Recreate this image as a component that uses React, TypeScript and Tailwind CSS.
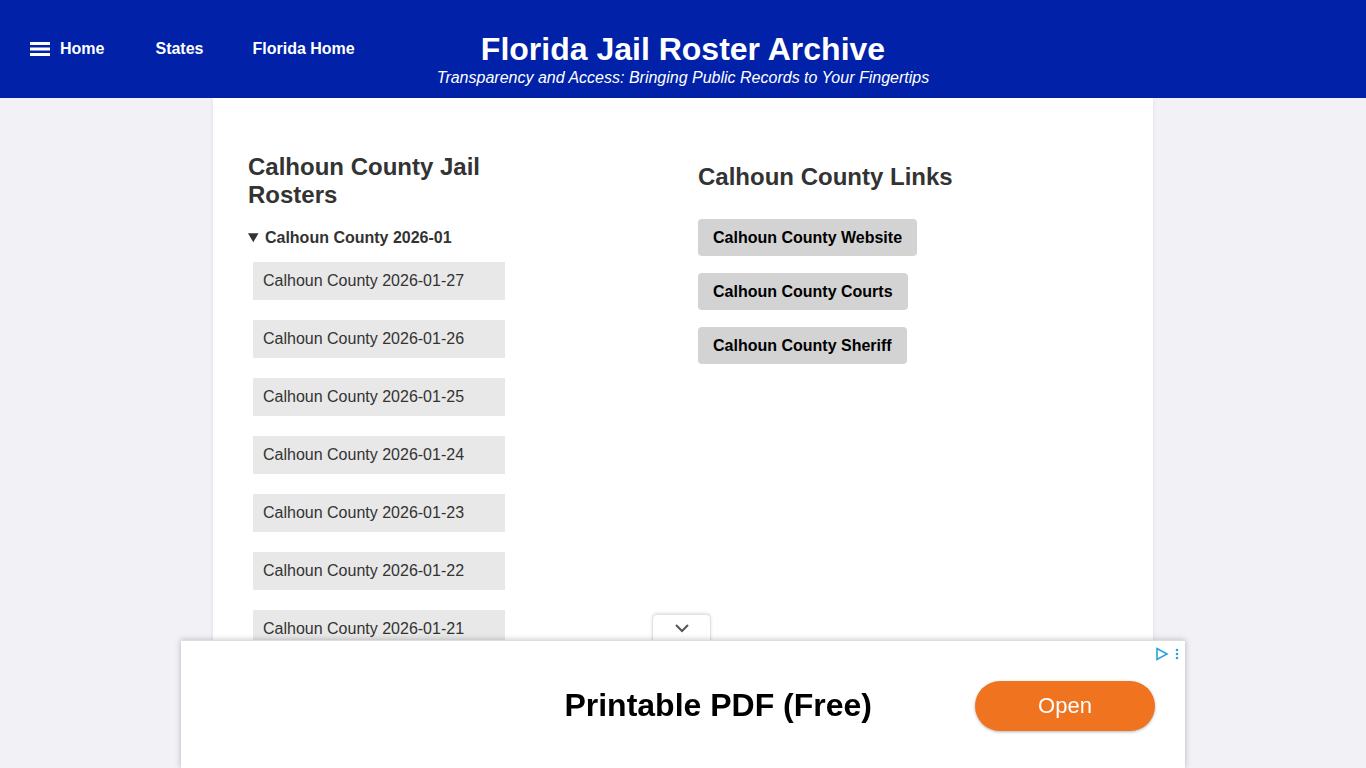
const rosterDates = [
  "2026-01-27",
  "2026-01-26",
  "2026-01-25",
  "2026-01-24",
  "2026-01-23",
  "2026-01-22",
  "2026-01-21",
  "2026-01-20",
  "2026-01-19",
  "2026-01-18",
];

const countyLinks = [
  "Calhoun County Website",
  "Calhoun County Courts",
  "Calhoun County Sheriff",
];

function Header() {
  return (
    <header className="bg-[#0021a8] text-white h-[98px] grid grid-cols-[1fr_auto_1fr] items-start">
      <nav className="flex items-center pl-[30px] pt-[37px] text-[16px] font-bold">
        <svg width="20" height="16" viewBox="0 0 20 16" className="mr-[10px]" fill="white">
          <rect x="0" y="1" width="20" height="3" />
          <rect x="0" y="6.5" width="20" height="3" />
          <rect x="0" y="12" width="20" height="3" />
        </svg>
        <a href="#" className="mr-[51px]">Home</a>
        <a href="#" className="mr-[49px]">States</a>
        <a href="#">Florida Home</a>
      </nav>
      <div className="text-center pt-[30px]">
        <h1 className="text-[32px] font-bold leading-[38px]">Florida Jail Roster Archive</h1>
        <p className="italic text-[16px] leading-[20px]">
          Transparency and Access: Bringing Public Records to Your Fingertips
        </p>
      </div>
      <div />
    </header>
  );
}

function RosterList() {
  return (
    <div className="max-w-[262px]">
      <h2 className="text-[24px] font-bold leading-[28px] text-[#333]">Calhoun County Jail Rosters</h2>
      <details open className="mt-[19px]">
        <summary className="text-[16px] font-bold text-[#333] cursor-pointer leading-[20px]">
          Calhoun County 2026-01
        </summary>
        <ul className="mt-[14px] ml-[5px] flex flex-col gap-[20px]">
          {rosterDates.map((d) => (
            <li key={d}>
              <a
                href="#"
                className="block w-[252px] h-[38px] leading-[38px] pl-[10px] bg-[#e8e8e8] text-[16px] text-[#333]"
              >
                Calhoun County {d}
              </a>
            </li>
          ))}
        </ul>
      </details>
    </div>
  );
}

function CountyLinks() {
  return (
    <div className="pt-[10px]">
      <h2 className="text-[24px] font-bold leading-[28px] text-[#333]">Calhoun County Links</h2>
      <div className="mt-[28px] flex flex-col items-start gap-[17px]">
        {countyLinks.map((l) => (
          <a
            key={l}
            href="#"
            className="h-[37px] leading-[37px] px-[15px] rounded-[4px] bg-[#d3d3d3] text-[16px] font-bold text-black"
          >
            {l}
          </a>
        ))}
      </div>
    </div>
  );
}

function AdBar() {
  return (
    <div className="fixed bottom-0 left-[181px] w-[1004px] h-[128px]">
      <div className="absolute -top-[26px] left-[471px] w-[59px] h-[27px] bg-white rounded-t-[5px] border border-b-0 border-[#e2e2e2] shadow-[0_-1px_3px_rgba(0,0,0,0.12)] flex items-center justify-center">
        <svg width="16" height="10" viewBox="0 0 16 10" fill="none" stroke="#555" strokeWidth="2">
          <path d="M2 2l6 6 6-6" />
        </svg>
      </div>
      <div className="relative h-full bg-white border-t border-[#ddd] shadow-[0_0_6px_rgba(0,0,0,0.25)] flex items-center justify-end pt-[2px]">
        <div className="absolute top-[6px] right-[6px] flex items-center gap-[6px]">
          <svg width="14" height="14" viewBox="0 0 14 14" fill="none" stroke="#2aa3d8" strokeWidth="1.6">
            <path d="M2 1.5l10 5.5-10 5.5z" />
          </svg>
          <svg width="4" height="12" viewBox="0 0 4 12" fill="#2aa3d8">
            <circle cx="2" cy="2" r="1.3" />
            <circle cx="2" cy="6" r="1.3" />
            <circle cx="2" cy="10" r="1.3" />
          </svg>
        </div>
        <div className="mr-[103px] -mt-[2px] text-[32px] font-bold text-black">Printable PDF (Free)</div>
        <a
          href="#"
          className="mr-[30px] w-[180px] h-[50px] rounded-full bg-[#f07320] text-white text-[22px] flex items-center justify-center shadow-[0_1px_3px_rgba(0,0,0,0.3)]"
        >
          Open
        </a>
      </div>
    </div>
  );
}

export default function App() {
  return (
    <div className="min-h-screen bg-[#f2f2f6] font-['Liberation_Sans',Arial,sans-serif]">
      <Header />
      <main className="w-[940px] mx-auto bg-white shadow-[0_0_4px_rgba(0,0,0,0.08)] rounded-b-[4px] px-[35px] pt-[55px] pb-[40px]">
        <div className="grid grid-cols-2 gap-[30px]">
          <RosterList />
          <CountyLinks />
        </div>
      </main>
      <AdBar />
    </div>
  );
}
